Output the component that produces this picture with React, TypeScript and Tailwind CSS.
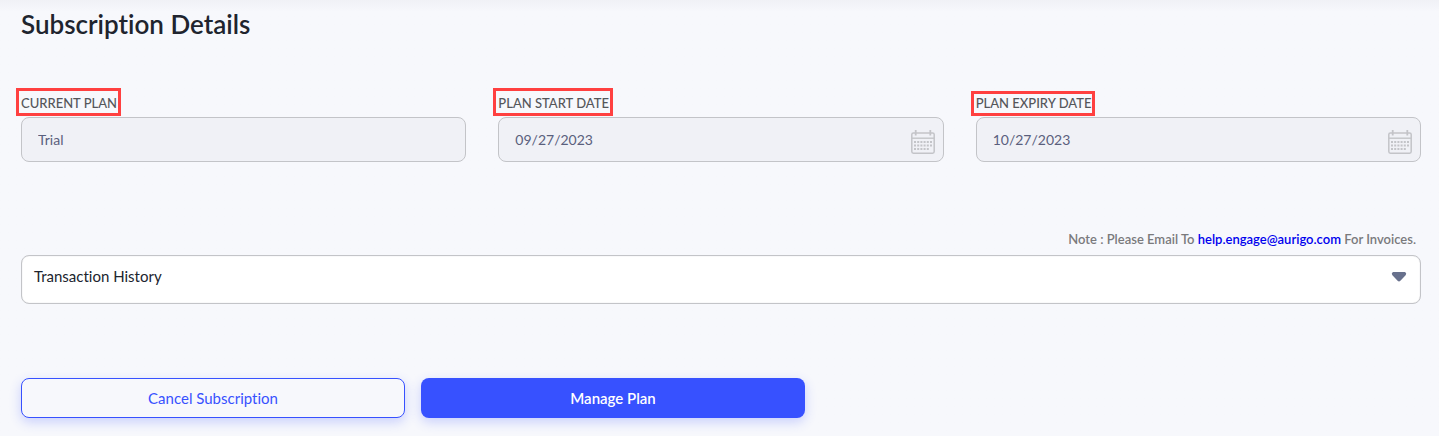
import type { ReactNode } from 'react';

const DOT_ROWS = [12, 15.5, 19];
const DOT_COLUMNS = [4, 7.2, 10.4, 13.6, 16.8, 20];

function CalendarIcon() {
  return (
    <svg aria-hidden="true" viewBox="0 0 24 24" className="size-6 shrink-0" fill="none" stroke="#c3c4c8">
      <rect x="0.8" y="3" width="22.4" height="20.2" rx="1.6" strokeWidth="1.5" />
      <path d="M1 8.2H23" strokeWidth="1.4" />
      <path d="M4.7 0V5.5M19.3 0V5.5" strokeWidth="1.8" />
      {DOT_ROWS.map((y, row) =>
        DOT_COLUMNS.map((x, col) =>
          row === 2 && col > 4 ? null : (
            <rect key={`${x}-${y}`} x={x - 1} y={y - 1} width="2" height="2" fill="#c3c4c8" stroke="none" />
          ),
        ),
      )}
    </svg>
  );
}

function Field({ id, label, value, frame, icon }: { id: string; label: string; value: string; frame: string; icon?: ReactNode }) {
  return (
    <div className="flex min-w-0 flex-1 flex-col">
      <label htmlFor={id} className="relative mb-1 self-start text-[13px] leading-5 font-medium text-[#55565a]">
        {label}
        <span aria-hidden="true" className={`absolute -right-1 -bottom-[3px] -left-[5px] border-3 border-[#ff4040] ${frame}`} />
      </label>
      <div className="flex h-[45px] items-center rounded-lg border border-[#c3c4c8] bg-[#f0f1f6] pr-2">
        <input id={id} type="text" disabled value={value} className="h-full min-w-0 flex-1 bg-transparent pl-4 text-[14px] text-[#5a5f7d]" />
        {icon && <span className="pt-1">{icon}</span>}
      </div>
    </div>
  );
}

export default function App() {
  return (
    <main className="min-h-screen bg-[#f7f8fc] bg-linear-to-b from-[#f0f1f6] to-[#f7f8fc] to-[12px] pt-2 pr-[18px] pb-[18px] pl-[21px] font-['Lato','Noto_Sans',sans-serif] [font-variant-ligatures:none]">
      <h1 className="text-[26px] leading-8 font-semibold text-[#20242e]">Subscription Details</h1>

      <form className="mt-[53px] flex gap-8">
        <Field id="plan" label="CURRENT PLAN" value="Trial" frame="-top-[5px]" />
        <Field id="start" label="PLAN START DATE" value="09/27/2023" frame="-top-[5px]" icon={<CalendarIcon />} />
        <Field id="expiry" label="PLAN EXPIRY DATE" value="10/27/2023" frame="-top-[2px]" icon={<CalendarIcon />} />
      </form>

      <p className="mt-[67px] mr-[5px] text-right text-[13px] leading-5 font-semibold text-[#7a7a7c]">
        Note : Please Email To <a href="mailto:help.engage@aurigo.com" className="text-[#0000ee]">help.engage@aurigo.com</a> For Invoices.
      </p>

      <button type="button" aria-expanded="false" className="mt-[6px] flex h-[49px] w-full items-start justify-between rounded-lg border border-[#c3c4c8] bg-white pt-[10px] pr-[13px] pl-3 text-[15px] leading-5 text-[#20242e] shadow-[inset_0_0_1px_#c3c4c8]">
        Transaction History
        <svg aria-hidden="true" viewBox="0 0 16 10" className="mt-[6px] h-[10px] w-4" fill="#68718d">
          <path d="M2 0H14Q16 1 14.8 3L9.4 8.8Q8 10 6.6 8.8L1.2 3Q0 1 2 0Z" />
        </svg>
      </button>

      <div className="mt-[74px] flex gap-4">
        <button type="button" className="h-10 w-96 rounded-lg border border-[#3751ff] bg-[#f7f8fc] text-[15px] text-[#3751ff] shadow-[0_4px_12px_rgba(55,81,255,0.24)]">
          Cancel Subscription
        </button>
        <button type="button" className="h-10 w-96 rounded-lg bg-[#3751ff] text-[15px] font-semibold text-white shadow-[0_4px_12px_rgba(55,81,255,0.24)]">
          Manage Plan
        </button>
      </div>
    </main>
  );
}
